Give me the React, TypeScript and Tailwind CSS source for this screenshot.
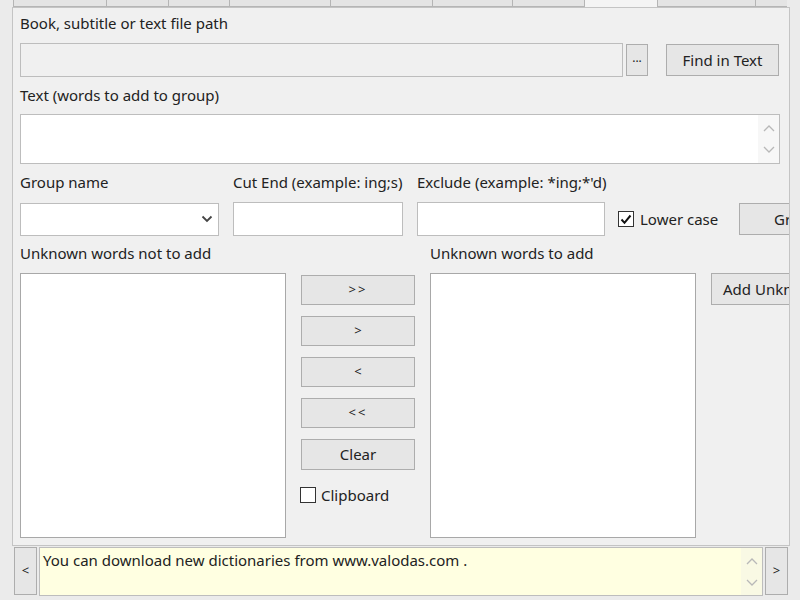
import React from 'react';

const font = { fontFamily: '"Noto Sans", "Open Sans", sans-serif' };

function Btn({ children, className = '' }: { children: React.ReactNode; className?: string }) {
  return (
    <div
      className={`flex items-center justify-center shrink-0 whitespace-nowrap overflow-hidden border border-[#adadad] bg-[#e6e6e6] text-[#222] ${className}`}
    >
      {children}
    </div>
  );
}

function Chevron({ up }: { up?: boolean }) {
  return (
    <svg width="12" height="8" viewBox="0 0 12 8" fill="none">
      <path
        d={up ? 'M1 7 L6 2 L11 7' : 'M1 1 L6 6 L11 1'}
        stroke="#b8b8b8"
        strokeWidth="1.3"
      />
    </svg>
  );
}

function Scroller({ bg }: { bg: string }) {
  return (
    <div className={`w-[21px] h-full flex flex-col items-center justify-center gap-[14px] ${bg}`}>
      <Chevron up />
      <Chevron />
    </div>
  );
}

function Check({ checked }: { checked?: boolean }) {
  return (
    <div className="w-[16px] h-[16px] border border-[#333] bg-white flex items-center justify-center shrink-0">
      {checked && (
        <svg width="12" height="11" viewBox="0 0 12 11">
          <path d="M1.5 5.5 L4.5 8.8 L10.5 1.5" stroke="#111" strokeWidth="2" fill="none" />
        </svg>
      )}
    </div>
  );
}

const tabs = [13, 106, 168, 229, 330, 432, 512, 584, 657, 755, 787];

export default function App() {
  return (
    <div className="w-[800px] h-[600px] bg-[#ebebeb] overflow-hidden text-[15px] text-[#222]" style={font}>
      {/* tab strip */}
      <div className="h-[7px] flex">
        <div className="w-[13px]" />
        {tabs.slice(0, -1).map((x, i) => (
          <div
            key={x}
            className={`h-full border-l border-[#b5b5b5] ${i === 7 ? 'bg-[#f4f4f4]' : 'bg-[#e4e4e4] border-b'}`}
            style={{ width: tabs[i + 1] - x }}
          />
        ))}
      </div>

      {/* panel */}
      <div className="ml-[12px] w-[778px] h-[539px] bg-[#f0f0f0] border border-[#c4c4c4] overflow-hidden pl-[7px]">
        <div className="mt-[5px] leading-[20px]">Book, subtitle or text file path</div>
        <div className="mt-[10px] flex items-center h-[34px]">
          <div className="w-[603px] h-[34px] border border-[#bdbdbd] bg-[#f0f0f0]" />
          <Btn className="ml-[3px] w-[22px] h-[32px] text-[12px] leading-none pb-[4px]">...</Btn>
          <Btn className="ml-[18px] w-[113px] h-[32px]">Find in Text</Btn>
        </div>
        <div className="mt-[8px] leading-[20px]">Text (words to add to group)</div>
        <div className="mt-[9px] w-[760px] h-[50px] border border-[#bdbdbd] bg-white flex justify-end">
          <Scroller bg="bg-[#f7f7f7]" />
        </div>

        <div className="mt-[8px] flex leading-[20px] whitespace-nowrap">
          <div className="w-[213px]">Group name</div>
          <div className="w-[184px]">Cut End (example: ing;s)</div>
          <div>Exclude (example: *ing;*'d)</div>
        </div>
        <div className="mt-[10px] flex items-center h-[34px]">
          <div className="w-[199px] h-[33px] border border-[#bdbdbd] bg-white flex items-center justify-end pr-[5px] shrink-0">
            <svg width="12" height="8" viewBox="0 0 12 8" fill="none">
              <path d="M1.5 1.5 L6 6 L10.5 1.5" stroke="#444" strokeWidth="1.8" />
            </svg>
          </div>
          <div className="ml-[14px] w-[170px] h-[34px] border border-[#bdbdbd] bg-white shrink-0" />
          <div className="ml-[14px] w-[188px] h-[34px] border border-[#bdbdbd] bg-white shrink-0" />
          <div className="ml-[13px] w-[121px] flex items-center gap-[6px] shrink-0 whitespace-nowrap">
            <Check checked />
            <span>Lower case</span>
          </div>
          <Btn className="w-[90px] h-[32px] justify-start pl-[34px]">Group</Btn>
        </div>

        <div className="mt-[7px] flex leading-[20px] whitespace-nowrap">
          <div className="w-[410px]">Unknown words not to add</div>
          <div>Unknown words to add</div>
        </div>
        <div className="mt-[10px] flex">
          <div className="w-[266px] h-[265px] border border-[#a8a8a8] bg-white shrink-0" />
          <div className="ml-[15px] w-[114px] flex flex-col gap-[11px] pt-[2px] shrink-0">
            <Btn className="h-[30px] text-[13px] tracking-[2px]">&gt;&gt;</Btn>
            <Btn className="h-[30px] text-[13px]">&gt;</Btn>
            <Btn className="h-[30px] text-[13px]">&lt;</Btn>
            <Btn className="h-[30px] text-[13px] tracking-[2px]">&lt;&lt;</Btn>
            <Btn className="h-[31px]">Clear</Btn>
            <div className="mt-[3px] -ml-[1px] flex items-center gap-[5px] whitespace-nowrap">
              <Check />
              <span>Clipboard</span>
            </div>
          </div>
          <div className="ml-[15px] w-[266px] h-[265px] border border-[#a8a8a8] bg-white shrink-0" />
          <Btn className="ml-[15px] w-[90px] h-[32px] justify-start pl-[11px]">Add Unknown</Btn>
        </div>
      </div>

      {/* bottom strip */}
      <div className="mt-[1px] flex h-[49px] pl-[14px]">
        <Btn className="w-[23px] h-[48px] text-[13px]">&lt;</Btn>
        <div className="ml-[2px] w-[724px] h-[49px] border border-[#bdbdbd] bg-[#ffffe1] flex">
          <div className="flex-1 pl-[3px] pt-[2px] leading-[20px]">
            You can download new dictionaries from www.valodas.com .
          </div>
          <Scroller bg="bg-[#f9f9e4]" />
        </div>
        <Btn className="ml-[2px] w-[23px] h-[48px] text-[13px]">&gt;</Btn>
      </div>
    </div>
  );
}
